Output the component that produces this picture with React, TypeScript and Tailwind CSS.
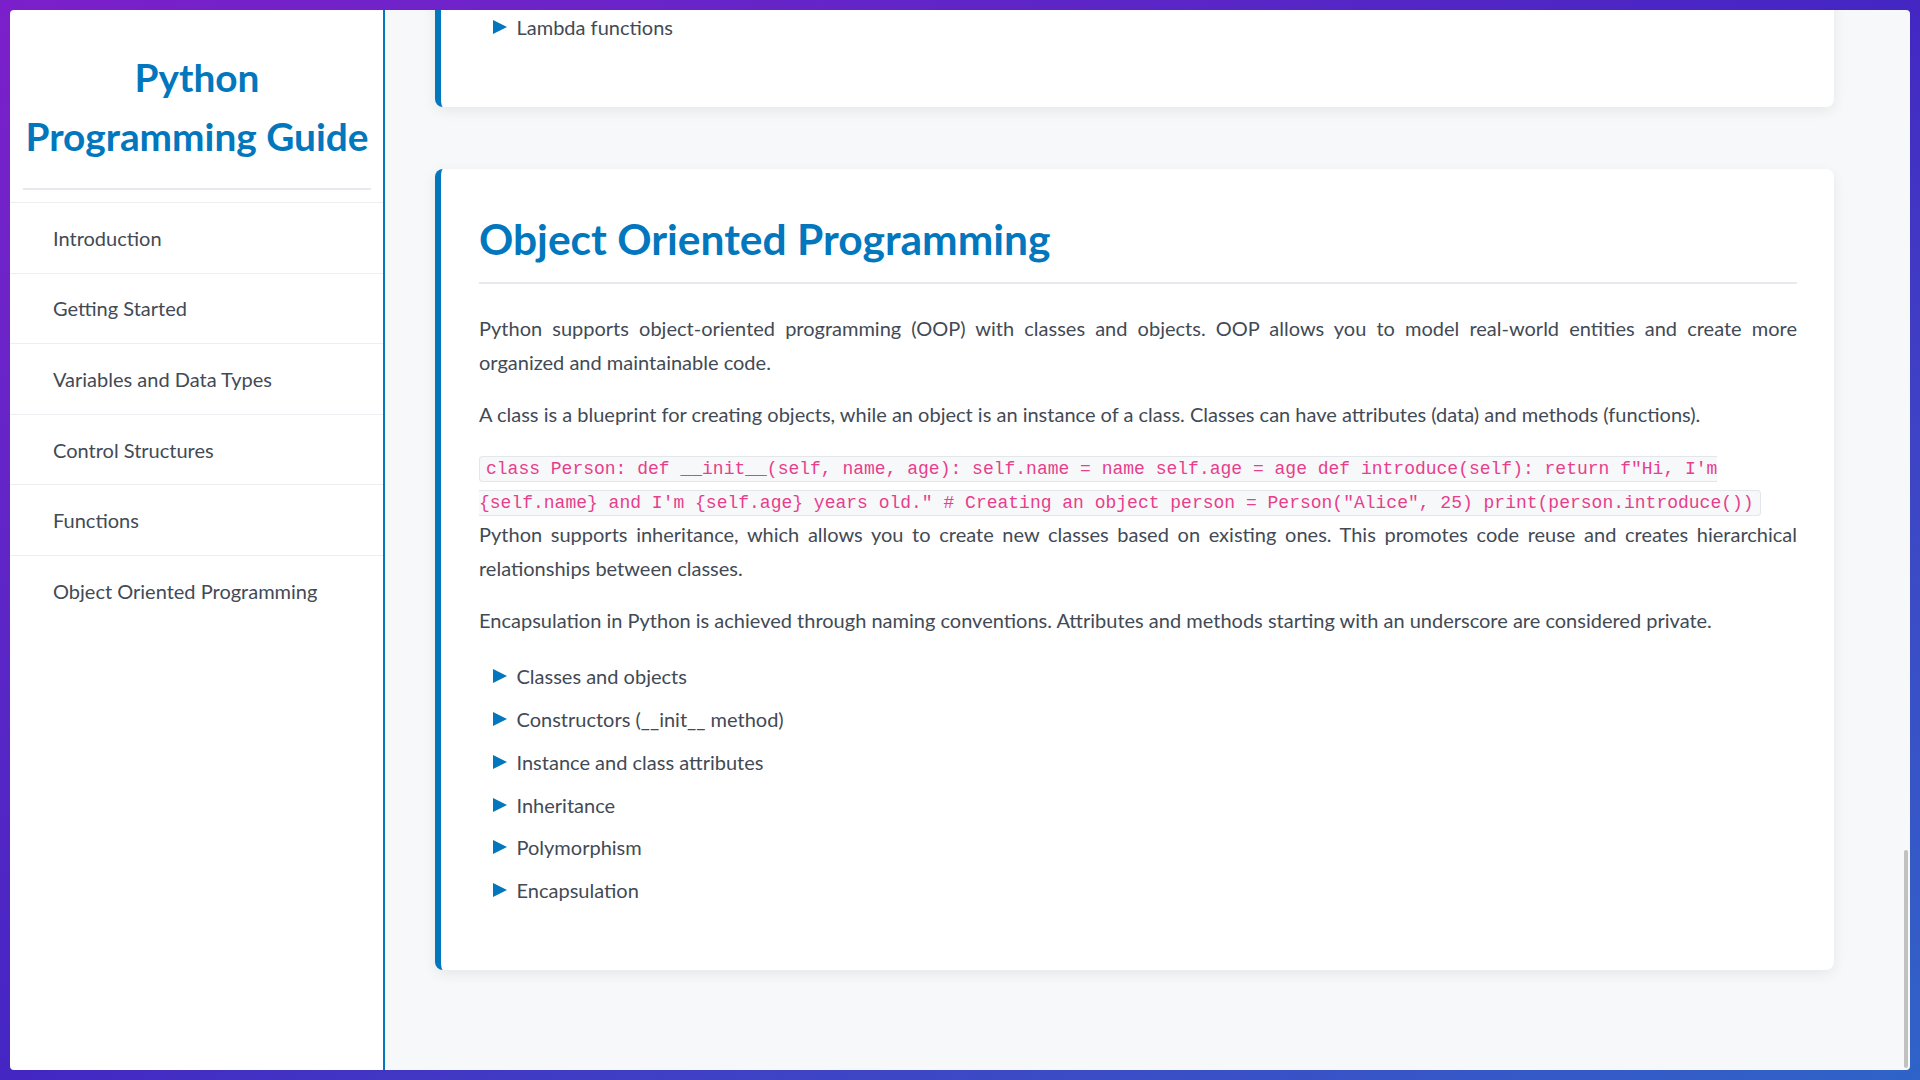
import { useLayoutEffect, useRef } from 'react';

type Section = {
  title: string;
  paragraphs: (string | { code: string })[];
  topics: string[];
};

const navItems = [
  'Introduction',
  'Getting Started',
  'Variables and Data Types',
  'Control Structures',
  'Functions',
  'Object Oriented Programming',
];

const sections: Section[] = [
  {
    title: 'Introduction',
    paragraphs: [
      'Python is a high-level, interpreted programming language known for its simplicity and readability. Created by Guido van Rossum and first released in 1991, Python has become one of the most popular programming languages in the world.',
      "Python's design philosophy emphasizes code readability with its notable use of significant indentation. Its language constructs and object-oriented approach aim to help programmers write clear, logical code for small and large-scale projects.",
      { code: 'print("Hello, World!")' },
      'Python is used in web development, data science, machine learning, automation, scientific computing and much more.',
    ],
    topics: [
      'Easy to learn and read',
      'Interpreted language',
      'Dynamically typed',
      'Extensive standard library',
      'Cross-platform compatibility',
      'Large community support',
    ],
  },
  {
    title: 'Getting Started',
    paragraphs: [
      'To start programming in Python, you need to install the Python interpreter on your computer. You can download it from the official Python website (python.org).',
      'Once installed, you can run Python code in interactive mode or by creating Python files with the .py extension.',
      { code: '# Check Python version python --version # Run a Python file python my_script.py' },
      'You can also use an Integrated Development Environment (IDE) like PyCharm, VS Code, or Jupyter Notebook for a better coding experience. Most editors offer syntax highlighting, debugging tools and code completion.',
    ],
    topics: [
      'Installing Python',
      'Using the Python interpreter',
      'Writing your first program',
      'Running Python scripts',
      'Choosing an IDE',
    ],
  },
  {
    title: 'Variables and Data Types',
    paragraphs: [
      "Variables in Python are created when you assign a value to them. Python is dynamically typed, which means you don't need to declare the type of a variable before using it.",
      'Python has several built-in data types for storing different kinds of values.',
      {
        code: '# Numbers age = 25 height = 5.9 # Strings name = "Alice" # Booleans is_student = True # Lists fruits = ["apple", "banana", "cherry"] # Dictionaries person = {"name": "Alice", "age": 25}',
      },
      'You can check the type of any variable with the built-in type() function.',
    ],
    topics: [
      'Integers and floats',
      'Strings',
      'Booleans',
      'Lists and tuples',
      'Dictionaries',
      'Sets',
    ],
  },
  {
    title: 'Control Structures',
    paragraphs: [
      'Control structures let you control the flow of your program. Python uses indentation to define blocks of code instead of curly braces.',
      {
        code: 'age = 18 if age >= 18: print("You are an adult") else: print("You are a minor") for i in range(5): print(i) count = 0 while count < 5: print(count) count += 1',
      },
      'Loops allow you to repeat a block of code multiple times, while conditional statements let you execute code only when certain conditions are met.',
    ],
    topics: [
      'If, elif and else statements',
      'For loops',
      'While loops',
      'Break and continue',
      'List comprehensions',
    ],
  },
  {
    title: 'Functions',
    paragraphs: [
      'Functions are reusable blocks of code that perform a specific task. They help you organize your code and avoid repetition.',
      'In Python, functions are defined using the def keyword, followed by the function name and parentheses.',
      {
        code: 'def greet(name): return f"Hello, {name}!" message = greet("Alice") print(message) # Lambda function square = lambda x: x ** 2 print(square(5))',
      },
      'Functions can accept parameters and return values. Python also supports default parameters, keyword arguments and variable-length arguments.',
    ],
    topics: [
      'Defining functions',
      'Parameters and arguments',
      'Return values',
      'Default parameters',
      '*args and **kwargs',
      'Lambda functions',
    ],
  },
  {
    title: 'Object Oriented Programming',
    paragraphs: [
      'Python supports object-oriented programming (OOP) with classes and objects. OOP allows you to model real-world entities and create more organized and maintainable code.',
      'A class is a blueprint for creating objects, while an object is an instance of a class. Classes can have attributes (data) and methods (functions).',
      {
        code: 'class Person: def __init__(self, name, age): self.name = name self.age = age def introduce(self): return f"Hi, I\'m {self.name} and I\'m {self.age} years old." # Creating an object person = Person("Alice", 25) print(person.introduce())',
      },
      'Python supports inheritance, which allows you to create new classes based on existing ones. This promotes code reuse and creates hierarchical relationships between classes.',
      'Encapsulation in Python is achieved through naming conventions. Attributes and methods starting with an underscore are considered private.',
    ],
    topics: [
      'Classes and objects',
      'Constructors (__init__ method)',
      'Instance and class attributes',
      'Inheritance',
      'Polymorphism',
      'Encapsulation',
    ],
  },
];

function Arrow() {
  return (
    <svg width="14" height="14" viewBox="0 0 14 14" className="shrink-0">
      <polygon points="0,0 14,7 0,14" fill="#0277bd" />
    </svg>
  );
}

function SectionCard({ section }: { section: Section }) {
  return (
    <section className="mb-[62px] max-w-[1399px] rounded-[8px] border-l-[6px] border-[#0277bd] bg-white pt-[45.5px] pb-[40px] pl-[38px] pr-[37px] shadow-[0_4px_14px_rgba(0,0,0,0.07)]">
      <h2 className="mb-[27px] border-b-2 border-[#e6eaee] pb-[17.5px] text-[42.5px] font-bold leading-[50px] text-[#0277bd]">
        {section.title}
      </h2>
      {section.paragraphs.map((p, i) =>
        typeof p === 'string' ? (
          <p key={i} className="mb-[18px] text-justify">
            {p}
          </p>
        ) : (
          <div key={i}>
            <code className="rounded-[4px] border border-[#e3e7ec] bg-[#f6f8fa] px-[6px] py-[2px] font-['Liberation_Mono',monospace] text-[18px] leading-[20px] text-[#e83e8c]">
              {p.code}
            </code>
          </div>
        ),
      )}
      <ul className="mt-[4.5px] mb-[18px] pl-[14px]">
        {section.topics.map((t) => (
          <li key={t} className="flex items-center gap-[9.5px] py-[4.4px]">
            <Arrow />
            <span>{t}</span>
          </li>
        ))}
      </ul>
    </section>
  );
}

export default function App() {
  const mainRef = useRef<HTMLElement>(null);

  useLayoutEffect(() => {
    const el = mainRef.current;
    if (el) el.scrollTop = el.scrollHeight;
  }, []);

  return (
    <div className="h-screen w-full bg-linear-to-br from-[#7c1fcb] via-[#4426c3] to-[#2f63c8] p-[10px] font-['Lato',sans-serif] text-[20px] leading-[34px] text-[#424a55]">
      <div className="flex h-full overflow-hidden rounded-[4px]">
        <aside className="w-[375px] shrink-0 border-r-2 border-[#0277bd] bg-white">
          <div className="border-b border-[#eceef1] pt-[38px] pb-[12px] pl-[13px] pr-[12px]">
            <h1 className="border-b-2 border-[#e6eaee] pb-[23px] text-center text-[38.8px] font-bold leading-[58.5px] text-[#0277bd]">
              Python Programming Guide
            </h1>
          </div>
          <nav>
            <ul>
              {navItems.map((item) => (
                <li
                  key={item}
                  className="cursor-pointer border-b border-[#eceef1] py-[19.8px] pl-[43px] leading-[30px] text-[#424a55] last:border-b-0">
                  {item}
                </li>
              ))}
            </ul>
          </nav>
        </aside>
        <div className="relative min-w-0 flex-1">
          <main
            ref={mainRef}
            className="h-full overflow-y-auto bg-[#f7f8fa] pt-[38px] pb-[38px] pl-[50px] pr-[58px] [scrollbar-width:none]">
            {sections.map((s) => (
              <SectionCard key={s.title} section={s} />
            ))}
          </main>
          {/* scroll thumb, page is scrolled to the bottom */}
          <div className="absolute right-[2px] bottom-[2px] h-[218px] w-[4px] rounded-full bg-[#c1c1c1]" />
        </div>
      </div>
    </div>
  );
}
